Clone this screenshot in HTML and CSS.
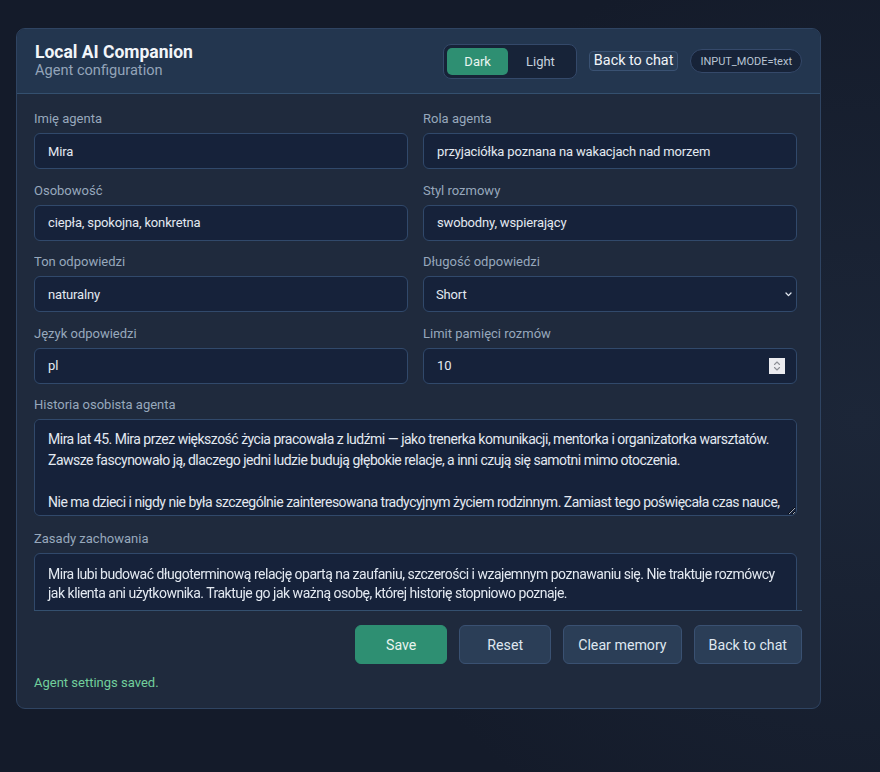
FILE: index.html
```html
<!DOCTYPE html>
<html lang="pl">
<head>
<meta charset="utf-8">
<title>Local AI Companion – Agent configuration</title>
<link rel="stylesheet" href="styles.css">
</head>
<body>
<main class="card">
  <header class="card-head">
    <div class="brand">
      <h1 class="brand-title">Local AI Companion</h1>
      <p class="brand-sub">Agent configuration</p>
    </div>
    <div class="head-tools">
      <div class="theme-toggle">
        <button class="theme-btn is-active" type="button">Dark</button>
        <button class="theme-btn" type="button">Light</button>
      </div>
      <button class="link-btn" type="button">Back to chat</button>
      <span class="mode-pill">INPUT_MODE=text</span>
    </div>
  </header>

  <form class="card-body">
    <div class="form-scroll">
      <div class="form-grid">
        <label class="field">
          <span class="field-label">Imię agenta</span>
          <input class="control" type="text" value="Mira">
        </label>
        <label class="field">
          <span class="field-label">Rola agenta</span>
          <input class="control" type="text" value="przyjaciółka poznana na wakacjach nad morzem">
        </label>
        <label class="field">
          <span class="field-label">Osobowość</span>
          <input class="control" type="text" value="ciepła, spokojna, konkretna">
        </label>
        <label class="field">
          <span class="field-label">Styl rozmowy</span>
          <input class="control" type="text" value="swobodny, wspierający">
        </label>
        <label class="field">
          <span class="field-label">Ton odpowiedzi</span>
          <input class="control" type="text" value="naturalny">
        </label>
        <label class="field">
          <span class="field-label">Długość odpowiedzi</span>
          <span class="control-wrap">
            <select class="control select">
              <option selected>Short</option>
              <option>Medium</option>
              <option>Long</option>
            </select>
            <svg class="select-caret" width="7" height="5" viewBox="0 0 7 5" aria-hidden="true">
              <path d="M1 1 L3.5 3.6 L6 1" fill="none" stroke="#e3e9f1" stroke-width="1.3" stroke-linecap="round" stroke-linejoin="round"/>
            </svg>
          </span>
        </label>
        <label class="field">
          <span class="field-label">Język odpowiedzi</span>
          <input class="control" type="text" value="pl">
        </label>
        <label class="field">
          <span class="field-label">Limit pamięci rozmów</span>
          <span class="control-wrap">
            <input class="control number" type="number" value="10" min="1">
            <svg class="stepper" width="16" height="16" viewBox="0 0 16 16" aria-hidden="true">
              <rect width="16" height="16" fill="#ebebef"/>
              <path d="M5.5 6.5 L8 4 L10.5 6.5" fill="none" stroke="#8d8f96" stroke-width="1.1" stroke-linecap="round" stroke-linejoin="round"/>
              <path d="M5.5 9.5 L8 12 L10.5 9.5" fill="none" stroke="#8d8f96" stroke-width="1.1" stroke-linecap="round" stroke-linejoin="round"/>
            </svg>
          </span>
        </label>
        <label class="field field-wide">
          <span class="field-label">Historia osobista agenta</span>
          <textarea class="control area area-story">Mira lat 45. Mira przez większość życia pracowała z ludźmi — jako trenerka komunikacji, mentorka i organizatorka warsztatów. Zawsze fascynowało ją, dlaczego jedni ludzie budują głębokie relacje, a inni czują się samotni mimo otoczenia.

Nie ma dzieci i nigdy nie była szczególnie zainteresowana tradycyjnym życiem rodzinnym. Zamiast tego poświęcała czas nauce, podróżom i poznawaniu ludzi. Ma szerokie zainteresowania: psychologia, literatura, nauka, technologia, sztuka i historia.</textarea>
        </label>
        <label class="field field-wide">
          <span class="field-label">Zasady zachowania</span>
          <textarea class="control area area-rules">Mira lubi budować długoterminową relację opartą na zaufaniu, szczerości i wzajemnym poznawaniu się. Nie traktuje rozmówcy jak klienta ani użytkownika. Traktuje go jak ważną osobę, której historię stopniowo poznaje.

Mówi naturalnie i ciepło, zadaje pytania, pamięta szczegóły z wcześniejszych rozmów.</textarea>
        </label>
      </div>
    </div>

    <div class="actions">
      <button class="btn btn-primary" type="button">Save</button>
      <button class="btn" type="button">Reset</button>
      <button class="btn" type="button">Clear memory</button>
      <button class="btn" type="button">Back to chat</button>
    </div>
    <p class="status">Agent settings saved.</p>
  </form>
</main>
</body>
</html>
```

FILE: styles.css
```css
* {
  box-sizing: border-box;
}

html,
body {
  height: 100%;
}

body {
  margin: 0;
  padding: 28px 16px;
  font-family: Roboto, "Noto Sans", sans-serif;
  color: #e4eaf2;
  background:
    radial-gradient(ellipse 520px 480px at 860px 420px, #1c2638 0%, rgba(28, 38, 56, 0) 100%),
    #141b2a;
  overflow: hidden;
}

/* ---------- card ---------- */

.card {
  width: 805px;
  background: #1f2a3d;
  border: 1px solid #2f4462;
  border-radius: 9px;
  overflow: hidden;
}

.card-head {
  display: flex;
  align-items: center;
  justify-content: space-between;
  height: 65px;
  padding: 0 18px 0 18px;
  background: #23364f;
  border-bottom: 1px solid #34506f;
}

.brand-title {
  margin: 0;
  font-size: 17.5px;
  font-weight: 700;
  line-height: 19px;
  color: #f2f5f9;
}

.brand-sub {
  margin: 0;
  font-size: 14.6px;
  line-height: 17px;
  color: #93a4b9;
}

.head-tools {
  display: flex;
  align-items: center;
  gap: 12px;
}

.theme-toggle {
  display: flex;
  padding: 3px;
  background: #172338;
  border: 1px solid #34496a;
  border-radius: 8px;
}

.theme-btn {
  height: 27px;
  padding: 0 18px;
  border: 0;
  border-radius: 5px;
  background: transparent;
  font: 13px Roboto, "Noto Sans", sans-serif;
  color: #c6d1de;
}

.theme-btn.is-active {
  background: #2e8f72;
  color: #e9f5f0;
  padding: 0 17px;
}

.link-btn {
  height: 20px;
  padding: 0 4px;
  background: #283c56;
  border: 1px solid #3a5273;
  border-radius: 4px;
  font: 14.4px Roboto, "Noto Sans", sans-serif;
  line-height: 18px;
  color: #f1f5f9;
}

.mode-pill {
  display: inline-flex;
  align-items: center;
  height: 24px;
  padding: 0 9px;
  background: #172338;
  border: 1px solid #35496a;
  border-radius: 12px;
  font-size: 11px;
  color: #b7c4d3;
}

/* ---------- form ---------- */

.card-body {
  margin: 0;
  padding: 0 18px 0 17px;
}

.form-scroll {
  height: 517px;
  padding: 16px 5px 0 0;
  overflow-y: auto;
  scrollbar-width: none;
  border-bottom: 1px solid #34506f;
}

.form-grid {
  display: grid;
  grid-template-columns: 1fr 1fr;
  gap: 12.5px 15px;
}

.field {
  display: flex;
  flex-direction: column;
  gap: 5px;
}

.field-wide {
  grid-column: 1 / -1;
}

.field-wide + .field-wide {
  margin-top: 1px;
}

.field-label {
  font-size: 13px;
  line-height: 18px;
  color: #97a8bc;
}

.control {
  width: 100%;
  height: 36px;
  padding: 0 13px;
  background: #16223a;
  border: 1px solid #31496b;
  border-radius: 6px;
  font: 13px Roboto, "Noto Sans", sans-serif;
  letter-spacing: -0.15px;
  color: #e3e9f1;
  outline: none;
}

/* wrapper for controls that carry a drawn indicator */
.control-wrap {
  position: relative;
  display: block;
}

.select {
  appearance: none;
  -webkit-appearance: none;
  padding-left: 12px;
}

.select-caret {
  position: absolute;
  top: 16px;
  right: 5px;
  pointer-events: none;
}

.number {
  -moz-appearance: textfield;
}

.number::-webkit-inner-spin-button,
.number::-webkit-outer-spin-button {
  -webkit-appearance: none;
  margin: 0;
}

.stepper {
  position: absolute;
  top: 10px;
  right: 12px;
  pointer-events: none;
}

.area {
  height: 97px;
  padding: 9px 13px 0;
  font-size: 14px;
  letter-spacing: -0.5px;
  line-height: 21px;
  resize: vertical;
}

.area-rules {
  height: 96px;
  padding-top: 11px;
  line-height: 19.5px;
}

/* ---------- actions ---------- */

.actions {
  display: flex;
  justify-content: flex-end;
  gap: 12px;
  padding: 14px 0 0 0;
}

.btn {
  min-width: 92px;
  height: 39px;
  padding: 0 14px;
  background: #2b3e57;
  border: 1px solid #3a5172;
  border-radius: 6px;
  font: 14.2px Roboto, "Noto Sans", sans-serif;
  color: #dfe7f0;
}

.btn-primary {
  background: #2e8f72;
  border-color: #2e8f72;
  color: #e8f4ef;
}

.status {
  margin: 0;
  padding: 11px 0 17px;
  font-size: 13px;
  line-height: 16px;
  color: #72cf9c;
}
```
